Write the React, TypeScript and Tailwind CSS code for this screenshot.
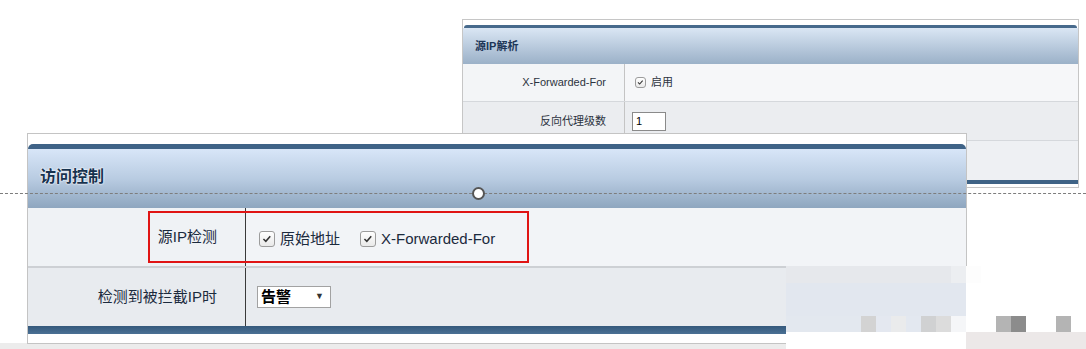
import React from 'react';

const font = { fontFamily: '"Liberation Sans", "Noto Sans CJK SC", sans-serif' };

function Check({ size = 16 }: { size?: number }) {
  return (
    <span
      className="inline-flex items-center justify-center rounded-[3px] border border-[#9c9c9c] bg-gradient-to-b from-white to-[#e9e9e9]"
      style={{ width: size, height: size }}
    >
      <svg viewBox="0 0 10 10" width={size * 0.6} height={size * 0.6}>
        <path d="M1.5 5.2 L4 7.6 L8.6 2.4" fill="none" stroke="#333" strokeWidth="1.6" />
      </svg>
    </span>
  );
}

function SmallPanel() {
  return (
    <div className="absolute left-[462px] top-[19px] w-[617px] h-[169px] border border-[#c6c6c6] bg-white pt-[5px] flex flex-col text-[11px] text-[#2c3340]" style={font}>
      <div className="h-[3px] mx-[1px] rounded-t-[3px] bg-[#476a8c]" />
      <div className="h-[36px] flex items-center pl-[12px] bg-gradient-to-b from-[#dae6f4] to-[#9bb1c8] font-bold text-[#1d3657]">
        源IP解析
      </div>
      <div className="h-[38px] flex border-b border-[#d5d8dc]">
        <div className="w-[162px] bg-[#f3f5f7] flex items-center justify-end pr-[18px] border-r border-[#c4c4c4]">X-Forwarded-For</div>
        <div className="flex-1 bg-[#f6f7f9] flex items-center pl-[10px] gap-[5px]">
          <Check size={11} />
          <span>启用</span>
        </div>
      </div>
      <div className="h-[39px] flex border-b border-[#d5d8dc]">
        <div className="w-[162px] bg-[#ebedf0] flex items-center justify-end pr-[18px] border-r border-[#c4c4c4]">反向代理级数</div>
        <div className="flex-1 bg-[#ebedf0] flex items-center pl-[7px]">
          <div className="w-[34px] h-[19px] bg-white border border-[#8a8a8a] flex items-center pl-[3px] text-[11px] text-black">1</div>
        </div>
      </div>
      <div className="h-[39px] flex">
        <div className="w-[162px] bg-[#eef0f3] border-r border-[#c4c4c4]" />
        <div className="flex-1 bg-[#eef0f3]" />
      </div>
      <div className="h-[4px] bg-[#3f6386]" />
    </div>
  );
}

function MainPanel() {
  return (
    <div className="absolute left-[27px] top-[133px] w-[940px] h-[211px] border border-[#c4c4c4] bg-white pt-[10px] flex flex-col" style={font}>
      <div className="h-[5px] rounded-t-[5px] bg-[#3f6387]" />
      <div
        className="h-[59px] flex items-center pl-[12px] bg-gradient-to-b from-[#d8e6f8] via-[#b9cce2] to-[#8ea6bf] font-bold text-[16px] text-[#17324f]"
        style={{ textShadow: '0 0 2px #fff, 0 0 2px #fff' }}
      >
        <span className="-mt-[4px]">访问控制</span>
      </div>
      <div className="h-[60px] flex border-b-2 border-[#cdd0d4] text-[15px] text-[#1b2a3d]">
        <div className="w-[218px] bg-[#eff2f5] flex items-center justify-end pr-[28px] border-r border-[#3a3a3a]">源IP检测</div>
        <div className="flex-1 bg-[#f2f4f7] flex items-center pl-[13px] pt-[4px]">
          <Check />
          <span className="ml-[5px]">原始地址</span>
          <span className="ml-[20px]"><Check /></span>
          <span className="ml-[5px]">X-Forwarded-For</span>
        </div>
      </div>
      <div className="h-[58px] flex text-[15px] text-[#1b2a3d]">
        <div className="w-[218px] bg-[#e8ebef] flex items-center justify-end pr-[28px] border-r border-[#3a3a3a]">检测到被拦截IP时</div>
        <div className="flex-1 bg-[#e8ebef] flex items-center pl-[11px]">
          <div className="w-[74px] h-[22px] bg-white border border-[#a2a2a2] flex items-center justify-between pl-[3px] pr-[6px]">
            <span className="font-bold text-black">告警</span>
            <span className="text-[9px] text-[#333]">▼</span>
          </div>
        </div>
      </div>
      <div className="h-[8px] bg-gradient-to-b from-[#35597c] to-[#4a7094]" />
      <div className="absolute left-[120px] top-[77px] w-[381px] h-[52px] border-2 border-[#e01414]" />
    </div>
  );
}

function Mosaic() {
  return (
    <div className="absolute left-[786px] top-[266px] w-[300px] h-[83px] flex flex-col">
      <div className="h-[17px] flex">
        <div className="w-[165px] bg-[#e6e8ec]" />
        <div className="w-[15px] bg-[#eceef1]" />
        <div className="w-[15px] bg-[#fdfdfd]" />
        <div className="flex-1 bg-white" />
      </div>
      <div className="h-[33px] flex">
        <div className="w-[180px] bg-[#e2e7ef]" />
        <div className="flex-1 bg-white" />
      </div>
      <div className="h-[16px] flex">
        <div className="w-[75px] bg-[#e3e8ef]" />
        <div className="w-[15px] bg-[#d3d3d3]" />
        <div className="w-[15px] bg-[#e4e8f0]" />
        <div className="w-[15px] bg-[#eaebec]" />
        <div className="w-[15px] bg-[#e3e8f0]" />
        <div className="w-[15px] bg-[#d0d1d2]" />
        <div className="w-[15px] bg-[#dcdcdc]" />
        <div className="w-[15px] bg-[#f5f6f8]" />
        <div className="w-[30px] bg-white" />
        <div className="w-[15px] bg-[#b4b4b4]" />
        <div className="w-[15px] bg-[#8c8c8c]" />
        <div className="w-[30px] bg-white" />
        <div className="w-[15px] bg-[#b4b4b4]" />
        <div className="flex-1 bg-white" />
      </div>
      <div className="flex-1 flex">
        <div className="w-[180px] bg-white" />
        <div className="flex-1 bg-[#ece8e8]" />
      </div>
    </div>
  );
}

export default function App() {
  return (
    <div className="relative w-[1086px] h-[349px] bg-white overflow-hidden">
      <div className="absolute left-0 top-[343px] w-full h-[6px] bg-[#ececec]" />
      <SmallPanel />
      <MainPanel />
      <div className="absolute left-0 top-[193px] w-full border-t border-dashed border-[#7d7d7d]" />
      <div className="absolute left-[472px] top-[187px] w-[13px] h-[13px] rounded-full bg-white border-2 border-[#555]" />
      <Mosaic />
    </div>
  );
}
